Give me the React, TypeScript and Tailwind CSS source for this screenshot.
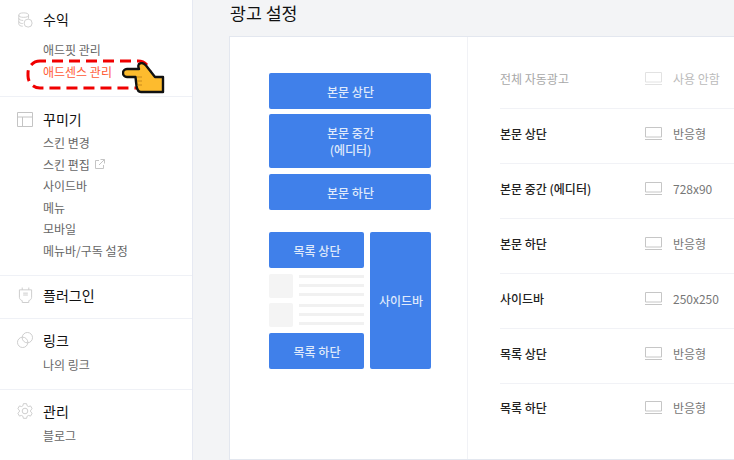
const font = "font-['Noto_Sans_CJK_KR','Noto_Sans',sans-serif]";

function CoinsIcon() {
  return (
    <svg className="mt-[1px]" width="16" height="16" viewBox="0 0 18 18" fill="none" stroke="#cbcbcb" strokeWidth="1">
      <ellipse cx="7.5" cy="3.5" rx="5.5" ry="2.5" />
      <path d="M2 3.5v10c0 1.4 2 2.5 4.5 2.5M2 7c0 1.4 2 2.5 5 2.5M2 10.500c0 1.400 2 2.500 4.500 2.500M13 3.500v4" />
      <circle cx="12.500" cy="12.500" r="4.500" />
    </svg>
  );
}

function LayoutIcon() {
  return (
    <svg width="16" height="15" viewBox="0 0 16 15" fill="none" stroke="#c4c4c4" strokeWidth="1">
      <path d="M.5.5h15v14H.5zM.5 5h15M5.500 5v9.500" />
    </svg>
  );
}

function PlugIcon() {
  return (
    <svg width="15" height="16" viewBox="0 0 16 17" fill="none" stroke="#cbcbcb" strokeWidth="1">
      <path d="M4.500 3V.5M11.500 3V.5M1.500 3h13v8c0 2-1.500 3-3 3.500v2h-7v-2c-1.500-.5-3-1.500-3-3.500zM5.500 6.500h5M5.500 8.500h5" />
    </svg>
  );
}

function LinkIcon() {
  return (
    <svg width="16" height="16" viewBox="0 0 17 17" fill="none" stroke="#cbcbcb" strokeWidth="1">
      <circle cx="6" cy="11" r="5.500" />
      <circle cx="11" cy="6" r="5.500" />
    </svg>
  );
}

function GearIcon() {
  return (
    <svg width="16" height="16" viewBox="0 0 17 17" fill="none" stroke="#cbcbcb" strokeWidth="1">
      <path d="M6.800.7h3.400l.5 2.200 1.600.9 2.100-.7 1.700 3-1.600 1.500v1.800l1.600 1.500-1.700 3-2.100-.7-1.600.9-.5 2.200H6.800l-.5-2.200-1.600-.9-2.100.7-1.700-3 1.600-1.500V7.600L.9 6.100l1.700-3 2.100.7 1.600-.9z" />
      <circle cx="8.500" cy="8.500" r="3" />
    </svg>
  );
}

function ScreenIcon({ muted }: { muted?: boolean }) {
  return (
    <svg width="17" height="14" viewBox="0 0 17 14" fill="none" stroke={muted ? "#e2e2e2" : "#c6c6c6"} strokeWidth="1">
      <path d="M.5.500h16v9.500H.5zM0 12.500h17" />
    </svg>
  );
}

function Section({
  icon,
  title,
  items = [],
  className,
  listClass = "mt-[3px]",
}: {
  icon: React.ReactNode;
  title: string;
  items?: string[];
  className: string;
  listClass?: string;
}) {
  return (
    <div className={`border-b border-[#eff1f6] ${className}`}>
      <div className="flex h-5 items-center">
        <span className="flex w-[43px] justify-center pl-[7px]">{icon}</span>
        <span className="text-[14px] text-[#111]">{title}</span>
      </div>
      {items.length > 0 && (
        <ul className={`pl-[43px] text-[12px] leading-[21.6px] text-[#666] ${listClass}`}>
          {items.map((item) => (
            <li key={item} className={`flex items-center gap-[5px] ${item === "애드센스 관리" ? "text-[#ff5a36]" : ""}`}>
              {item}
              {item === "스킨 편집" && (
                <svg width="10" height="10" viewBox="0 0 10 10" fill="none" stroke="#c4c4c4">
                  <path d="M4 1.500H.5v8h8V6M5.500.5h4v4M9.500.5 4 6" />
                </svg>
              )}
            </li>
          ))}
        </ul>
      )}
    </div>
  );
}

function Slot({ label, className }: { label: React.ReactNode; className: string }) {
  return (
    <div
      className={`flex items-center justify-center rounded-[2px] bg-[#4080ea] pl-[1px] text-center text-[12px] leading-[17px] font-medium text-[#dfe9fb] ${className}`}
    >
      {label}
    </div>
  );
}

function ListRows() {
  return (
    <div className="flex gap-[6px]">
      <div className="h-6 w-6 rounded-[2px] bg-[#f4f4f4]" />
      <div className="flex flex-1 flex-col gap-[6px] pt-[1px]">
        <div className="h-[3px] bg-[#f1f1f1]" />
        <div className="h-[3px] bg-[#f1f1f1]" />
        <div className="h-[3px] bg-[#f1f1f1]" />
      </div>
    </div>
  );
}

const rows = [
  ["본문 상단", "반응형"],
  ["본문 중간 (에디터)", "728x90"],
  ["본문 하단", "반응형"],
  ["사이드바", "250x250"],
  ["목록 상단", "반응형"],
  ["목록 하단", "반응형"],
];

function SettingRow({ label, value, muted }: { label: string; value: string; muted?: boolean }) {
  return (
    <div className="flex h-[55px] items-center border-b border-[#f1f2f6] pb-[5px] last:border-b-0 last:pb-[7px]">
      <span className={`w-[145px] text-[12px] ${muted ? "text-[#a8a8a8]" : "font-medium text-[#222]"}`}>{label}</span>
      <ScreenIcon muted={muted} />
      <span className={`ml-[11px] text-[12px] ${muted ? "text-[#bbb]" : "text-[#777]"}`}>{value}</span>
    </div>
  );
}

export default function App() {
  return (
    <div className={`relative flex h-[460px] w-[734px] overflow-hidden bg-[#f3f4f6] ${font}`}>
      <aside className="h-full w-[193px] shrink-0 border-r border-[#e6e9f2] bg-white">
        <Section
          className="h-[97px] pt-[9px]"
          listClass="mt-[10px]"
          icon={<CoinsIcon />}
          title="수익"
          items={["애드핏 관리", "애드센스 관리"]}
        />
        <Section
          className="h-[179px] pt-[12px]"
          icon={<LayoutIcon />}
          title="꾸미기"
          items={["스킨 변경", "스킨 편집", "사이드바", "메뉴", "모바일", "메뉴바/구독 설정"]}
        />
        <Section className="h-[43px] pt-[9px]" icon={<PlugIcon />} title="플러그인" />
        <Section className="h-[71px] pt-[11px]" listClass="mt-[4px]" icon={<LinkIcon />} title="링크" items={["나의 링크"]} />
        <Section className="h-[70px] border-b-0 pt-[11px]" listClass="mt-[4px]" icon={<GearIcon />} title="관리" items={["블로그"]} />
      </aside>

      <main className="min-w-0 flex-1 pl-[36px]">
        <h1 className="flex h-[36px] items-start pl-[1px] text-[17.3px] leading-[25px] font-normal text-[#111]">광고 설정</h1>
        <div className="flex h-[424px] w-[560px] border border-[#e3e7ef] bg-white">
          <div className="w-[238px] shrink-0 border-r border-[#f1f2f6] pt-[36px] pl-[39px]">
            <div className="flex w-[162px] flex-col">
              <Slot className="h-[36px]" label="본문 상단" />
              <Slot
                className="mt-[5px] h-[54px]"
                label={
                  <>
                    본문 중간
                    <br />
                    (에디터)
                  </>
                }
              />
              <Slot className="mt-[6px] h-[36px]" label="본문 하단" />
            </div>
            <div className="mt-[22px] flex w-[162px] gap-[6px]">
              <div className="flex w-[95px] flex-col">
                <Slot className="h-[36px]" label="목록 상단" />
                <div className="flex flex-col gap-[5px] pt-[6px] pb-[6px]">
                  <ListRows />
                  <ListRows />
                </div>
                <Slot className="h-[36px]" label="목록 하단" />
              </div>
              <Slot className="w-[61px]" label="사이드바" />
            </div>
          </div>
          <div className="flex-1 pt-[17px] pl-[32px]">
            <SettingRow label="전체 자동광고" value="사용 안함" muted />
            {rows.map(([label, value]) => (
              <SettingRow key={label} label={label} value={value} />
            ))}
          </div>
        </div>
      </main>

      {/* red dashed annotation over the menu item */}
      <svg className="absolute top-[59px] left-[26px]" width="126" height="31" viewBox="0 0 126 31" fill="none">
        <rect x="2" y="2" width="122" height="27" rx="12" stroke="#f00000" strokeWidth="3" strokeDasharray="11 6" strokeDashoffset="5" />
      </svg>
      <svg className="absolute top-[62px] left-[122px]" width="44" height="32" viewBox="0 0 44 32">
        <path
          d="M5 7h12c-1-2-1-5 1-5.500 2-1 4 0 6 2L33 15h8v15H19c-2.500 0-4-3-4.500-6L13.500 15H5C2.500 15 1 13 1 11s1.500-4 4-4z"
          fill="#fdbb2e"
          stroke="#111"
          strokeWidth="2.400"
          strokeLinejoin="round"
        />
        <path d="M15 15h5M15 19h5M16 23h4" stroke="#c98a1c" strokeWidth="1" />
      </svg>
    </div>
  );
}
